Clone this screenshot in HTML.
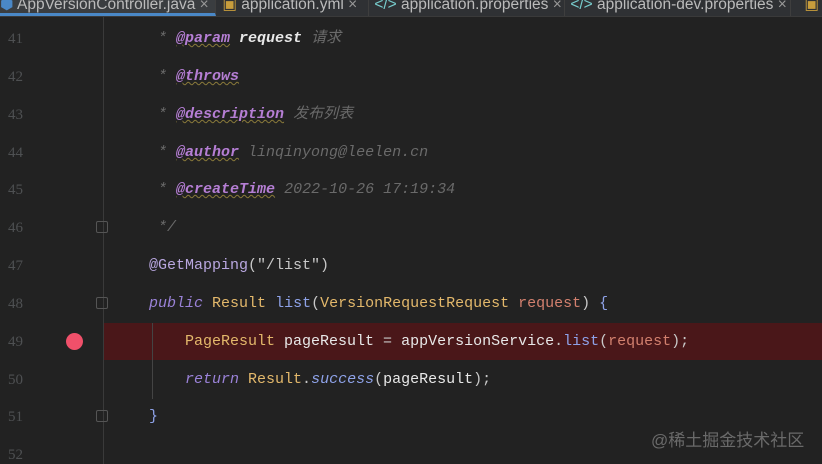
<!DOCTYPE html><html><head><meta charset="utf-8"><style>
html,body{margin:0;width:822px;height:464px;overflow:hidden}
body{background:#222222;position:relative;font-family:"Liberation Mono","Noto Sans CJK SC",monospace}
.tabs{position:absolute;left:0;top:0;width:822px;height:16px;background:#2f3134;border-bottom:1px solid #3a3a3a;font-family:"Liberation Sans",sans-serif;font-size:15.5px;color:#bbb;white-space:nowrap;overflow:hidden}
.tab{position:absolute;top:-6px;height:22px;line-height:22px;border-right:1px solid #3e3e3e}
.ln{position:absolute;left:8px;width:30px;color:#4e5052;font-size:15px;line-height:38px;height:38px;font-family:"Liberation Serif",serif}
.l{position:absolute;font-size:15px;line-height:38px;height:38px;white-space:pre;color:#c8c8c8}
.c{color:#6a6a6a;font-style:italic}.t{color:#b57ed4;font-weight:bold;font-style:italic;text-decoration:underline wavy #8a7a3a 1px}
.k{color:#9a82d8;font-style:italic}.y{color:#e3b86b}.f{color:#8ea2e8}.p{color:#d2806e}.w{color:#e8e8e8}
.fold{position:absolute;left:96px;width:12px;height:12px;border:1px solid #555;border-radius:2px;box-sizing:border-box}
</style></head><body>
<div class="tabs">
<div class="tab" style="left:0;width:216px;background:#3a3d40;border-bottom:3px solid #4a88c7;box-sizing:border-box"><span style="color:#4a88c7">⬢</span> AppVersionController.java <span style="color:#999">×</span></div>
<div class="tab" style="left:218px;width:150px">&nbsp;<span style="color:#c89d3c">▣</span> application.yml <span style="color:#999">×</span></div>
<div class="tab" style="left:370px;width:194px">&nbsp;<span style="color:#7cc">&lt;/&gt;</span> application.properties <span style="color:#999">×</span></div>
<div class="tab" style="left:566px;width:224px">&nbsp;<span style="color:#7cc">&lt;/&gt;</span> application-dev.properties <span style="color:#999">×</span></div>
<div class="tab" style="left:800px;width:22px">&nbsp;<span style="color:#c89d3c">▣</span></div>
</div>
<div style="position:absolute;left:103px;top:17px;width:1px;height:447px;background:#3a3a3a"></div>
<div style="position:absolute;left:104px;top:323px;width:718px;height:37px;background:#4a1719"></div>
<div style="position:absolute;left:152px;top:323px;width:1px;height:76px;background:#444"></div>
<div style="position:absolute;left:66px;top:333px;width:17px;height:17px;border-radius:50%;background:#f0506a"></div>
<div class="fold" style="top:221px"></div><div class="fold" style="top:297px"></div><div class="fold" style="top:410px"></div>
<div class="ln" style="top:20px">41</div><div class="ln" style="top:58px">42</div><div class="ln" style="top:96px">43</div><div class="ln" style="top:134px">44</div><div class="ln" style="top:171px">45</div><div class="ln" style="top:209px">46</div><div class="ln" style="top:247px">47</div><div class="ln" style="top:285px">48</div><div class="ln" style="top:323px">49</div><div class="ln" style="top:361px">50</div><div class="ln" style="top:398px">51</div><div class="ln" style="top:436px">52</div>
<div class="l" style="left:158px;top:20px"><span class="c">* </span><span class="t">@param</span> <span class="w" style="font-style:italic;font-weight:bold">request</span> <span class="c">请求</span></div>
<div class="l" style="left:158px;top:58px"><span class="c">* </span><span class="t">@throws</span></div>
<div class="l" style="left:158px;top:96px"><span class="c">* </span><span class="t">@description</span> <span class="c">发布列表</span></div>
<div class="l" style="left:158px;top:134px"><span class="c">* </span><span class="t">@author</span> <span class="c">linqinyong@leelen.cn</span></div>
<div class="l" style="left:158px;top:171px"><span class="c">* </span><span class="t">@createTime</span> <span class="c">2022-10-26 17:19:34</span></div>
<div class="l" style="left:158px;top:209px"><span class="c">*/</span></div>
<div class="l" style="left:149px;top:247px"><span style="color:#b9a7e0">@GetMapping</span>("/list")</div>
<div class="l" style="left:149px;top:285px"><span class="k">public</span> <span class="y">Result</span> <span class="f">list</span>(<span class="y">VersionRequestRequest</span> <span class="p">request</span>) <span class="f">{</span></div>
<div class="l" style="left:185px;top:323px"><span class="y">PageResult</span> <span class="w">pageResult</span> = <span class="w">appVersionService</span>.<span class="f">list</span>(<span class="p">request</span>);</div>
<div class="l" style="left:185px;top:361px"><span class="k">return</span> <span class="y">Result</span>.<span class="k" style="color:#8ea2e8">success</span>(<span class="w">pageResult</span>);</div>
<div class="l" style="left:149px;top:398px"><span class="f">}</span></div>
<div style="position:absolute;left:651px;top:426px;font-family:'Liberation Sans','Noto Sans CJK SC',sans-serif;font-size:17px;color:#6a6a6a">@稀土掘金技术社区</div>
</body></html>
